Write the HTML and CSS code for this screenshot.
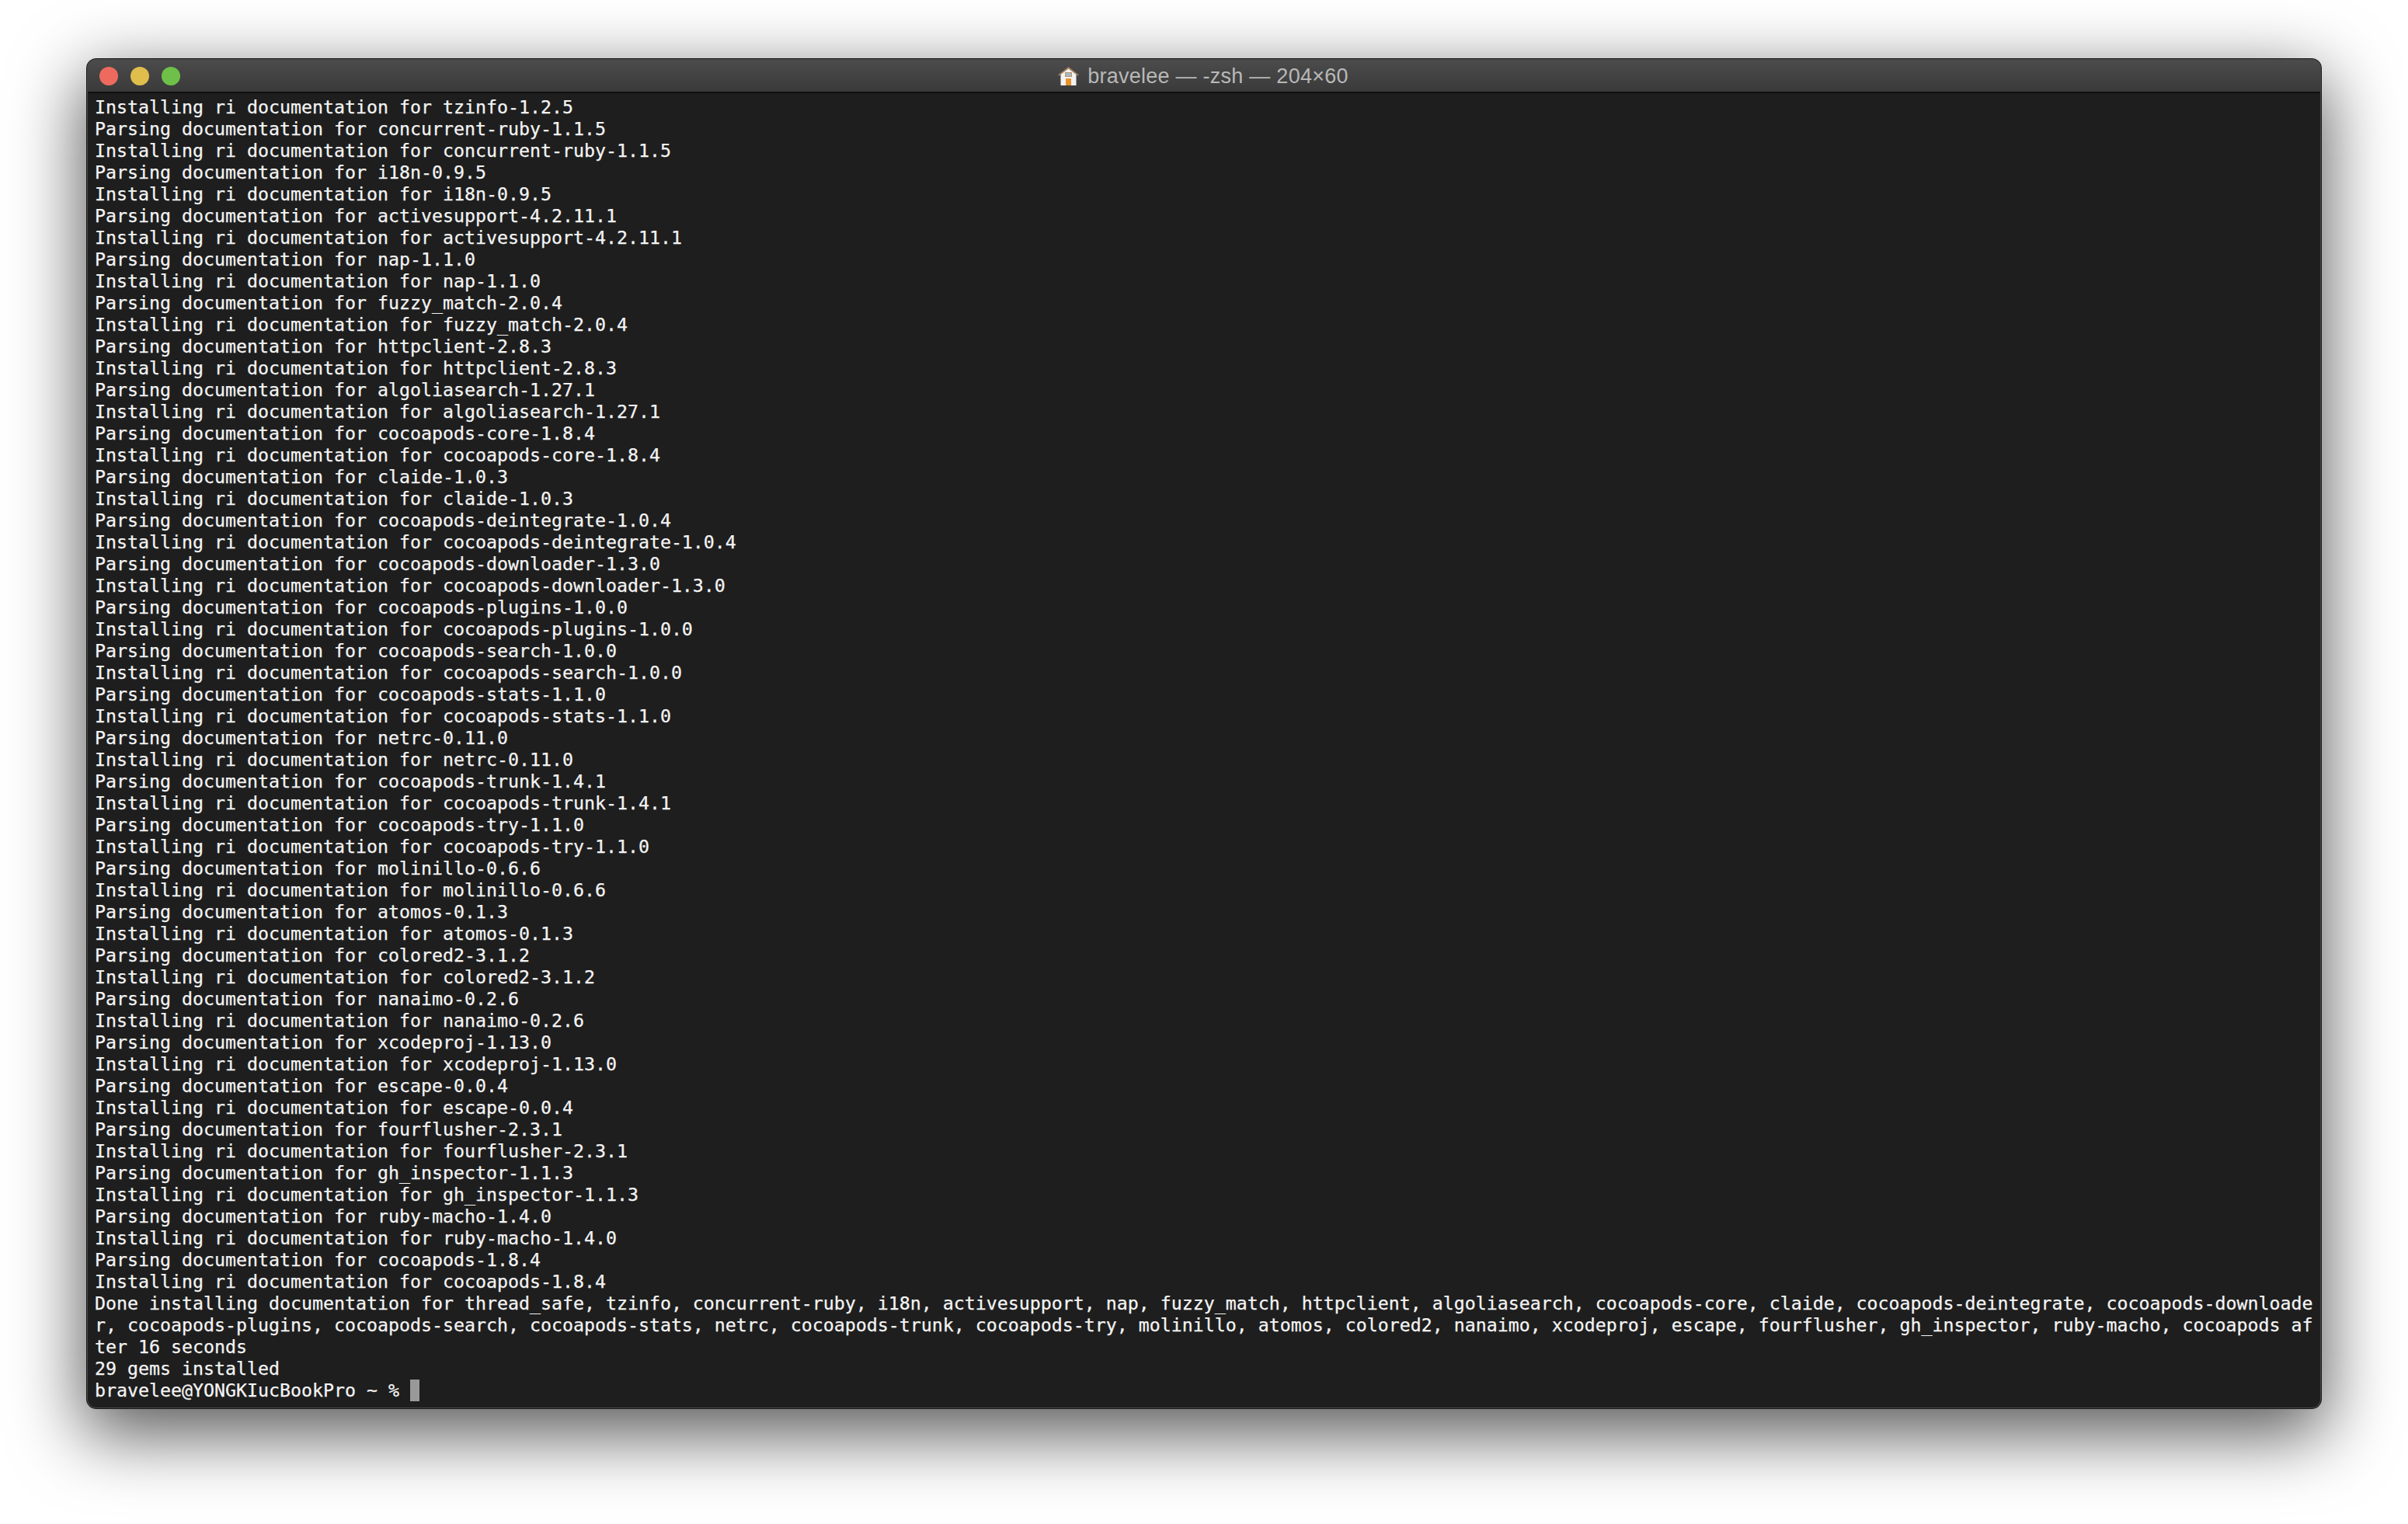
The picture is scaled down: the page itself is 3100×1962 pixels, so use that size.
FILE: index.html
```html
<!DOCTYPE html>
<html lang="en">
<head>
<meta charset="utf-8">
<title>bravelee — -zsh — 204×60</title>
<link rel="stylesheet" href="styles.css">
</head>
<body>
<div class="window">
  <header class="titlebar">
    <div class="lights"><span class="light red"></span><span class="light yellow"></span><span class="light green"></span></div>
    <div class="title">
      <svg class="home" viewBox="0 0 27 24" width="27" height="24" aria-hidden="true">
        <path d="M3.500 9 13.500 1l10 8v15h-20z" fill="#f3f2f0"/>
        <path d="M0 10.500 13.500 0 27 10.500l-1.500 1L13.500 2.500 1.500 11.500z" fill="#a5815e"/>
        <rect x="9.500" y="7.500" width="8" height="5" fill="#a9b8c4" stroke="#b5946f" stroke-width="1"/>
        <rect x="10" y="15" width="7" height="9" fill="#e8922e"/>
      </svg>
      <span>bravelee — -zsh — 204×60</span>
    </div>
  </header>
  <pre class="term">Installing ri documentation for tzinfo-1.2.5
Parsing documentation for concurrent-ruby-1.1.5
Installing ri documentation for concurrent-ruby-1.1.5
Parsing documentation for i18n-0.9.5
Installing ri documentation for i18n-0.9.5
Parsing documentation for activesupport-4.2.11.1
Installing ri documentation for activesupport-4.2.11.1
Parsing documentation for nap-1.1.0
Installing ri documentation for nap-1.1.0
Parsing documentation for fuzzy_match-2.0.4
Installing ri documentation for fuzzy_match-2.0.4
Parsing documentation for httpclient-2.8.3
Installing ri documentation for httpclient-2.8.3
Parsing documentation for algoliasearch-1.27.1
Installing ri documentation for algoliasearch-1.27.1
Parsing documentation for cocoapods-core-1.8.4
Installing ri documentation for cocoapods-core-1.8.4
Parsing documentation for claide-1.0.3
Installing ri documentation for claide-1.0.3
Parsing documentation for cocoapods-deintegrate-1.0.4
Installing ri documentation for cocoapods-deintegrate-1.0.4
Parsing documentation for cocoapods-downloader-1.3.0
Installing ri documentation for cocoapods-downloader-1.3.0
Parsing documentation for cocoapods-plugins-1.0.0
Installing ri documentation for cocoapods-plugins-1.0.0
Parsing documentation for cocoapods-search-1.0.0
Installing ri documentation for cocoapods-search-1.0.0
Parsing documentation for cocoapods-stats-1.1.0
Installing ri documentation for cocoapods-stats-1.1.0
Parsing documentation for netrc-0.11.0
Installing ri documentation for netrc-0.11.0
Parsing documentation for cocoapods-trunk-1.4.1
Installing ri documentation for cocoapods-trunk-1.4.1
Parsing documentation for cocoapods-try-1.1.0
Installing ri documentation for cocoapods-try-1.1.0
Parsing documentation for molinillo-0.6.6
Installing ri documentation for molinillo-0.6.6
Parsing documentation for atomos-0.1.3
Installing ri documentation for atomos-0.1.3
Parsing documentation for colored2-3.1.2
Installing ri documentation for colored2-3.1.2
Parsing documentation for nanaimo-0.2.6
Installing ri documentation for nanaimo-0.2.6
Parsing documentation for xcodeproj-1.13.0
Installing ri documentation for xcodeproj-1.13.0
Parsing documentation for escape-0.0.4
Installing ri documentation for escape-0.0.4
Parsing documentation for fourflusher-2.3.1
Installing ri documentation for fourflusher-2.3.1
Parsing documentation for gh_inspector-1.1.3
Installing ri documentation for gh_inspector-1.1.3
Parsing documentation for ruby-macho-1.4.0
Installing ri documentation for ruby-macho-1.4.0
Parsing documentation for cocoapods-1.8.4
Installing ri documentation for cocoapods-1.8.4
Done installing documentation for thread_safe, tzinfo, concurrent-ruby, i18n, activesupport, nap, fuzzy_match, httpclient, algoliasearch, cocoapods-core, claide, cocoapods-deintegrate, cocoapods-downloade
r, cocoapods-plugins, cocoapods-search, cocoapods-stats, netrc, cocoapods-trunk, cocoapods-try, molinillo, atomos, colored2, nanaimo, xcodeproj, escape, fourflusher, gh_inspector, ruby-macho, cocoapods af
ter 16 seconds
29 gems installed
bravelee@YONGKIucBookPro ~ % <span class="cursor"> </span></pre>
</div>
</body>
</html>
```
FILE: styles.css
```css
* { box-sizing: border-box; }
html, body { margin: 0; background: #fff; }
body { padding: 76px 112px 149px; width: 3100px; height: 1962px; overflow: hidden; }
.window {
  position: relative;
  width: 2876px;
  height: 1737px;
  display: flex;
  flex-direction: column;
  border-radius: 12px;
  background: #1e1e1e;
  box-shadow: 0 0 0 1px #151515, 0 28px 90px 6px rgba(0,0,0,.65);
}
.window::after {
  content: "";
  position: absolute;
  inset: 0;
  border-radius: 12px;
  box-shadow: inset 0 0 0 1px #4a4a4a;
  pointer-events: none;
}
.titlebar {
  flex: none;
  height: 44px;
  position: relative;
  display: flex;
  align-items: center;
  justify-content: center;
  padding: 2px 2px 0 0;
  border-radius: 12px 12px 0 0;
  background: linear-gradient(#4c4c4c, #3a3a3a);
  border-bottom: 2px solid #101010;
}
.lights {
  position: absolute;
  left: 16px;
  top: 10px;
  display: flex;
  gap: 16px;
}
.light { width: 24px; height: 24px; border-radius: 50%; }
.red { background: #ee6a5f; }
.yellow { background: #e0be4c; }
.green { background: #6fc048; }
.title {
  display: flex;
  align-items: center;
  gap: 11px;
  font: 27px/1 "Liberation Sans", sans-serif;
  letter-spacing: .25px;
  color: #b8b8b8;
  white-space: nowrap;
}
.term {
  flex: 1;
  margin: 0;
  padding: 4px 0 0 10px;
  border-radius: 0 0 12px 12px;
  background: #1e1e1e;
  color: #f4f4f4;
  font: 23.25px/28px "DejaVu Sans Mono", "Liberation Mono", monospace;
  -webkit-text-stroke: .25px #f4f4f4;
  white-space: pre;
}
.cursor {
  display: inline-block;
  width: 12px;
  height: 28px;
  vertical-align: top;
  background: #999;
  -webkit-text-stroke: 0;
}
```
